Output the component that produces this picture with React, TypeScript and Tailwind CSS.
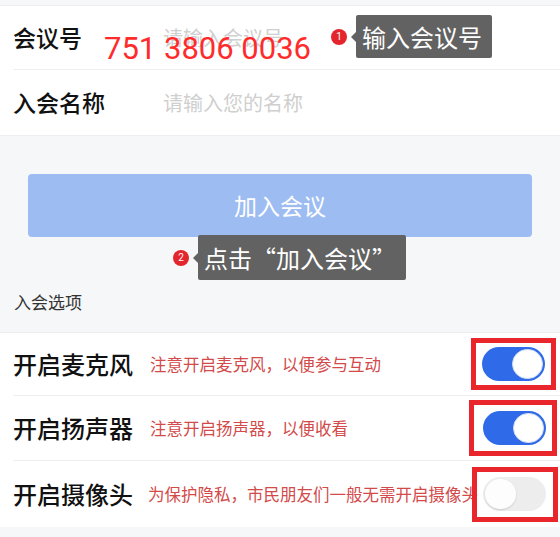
import React from 'react';

const cjk = { fontFamily: '"Noto Sans CJK SC", "Noto Sans", sans-serif' };

const Badge = ({ n }: { n: number }) => (
  <div className="w-[16px] h-[16px] rounded-full bg-[#e3262d] text-white text-[10px] leading-[16px] text-center" style={{ fontFamily: 'Roboto, sans-serif' }}>
    {n}
  </div>
);

const Tip = ({ text }: { text: string }) => (
  <div className="relative flex items-center bg-[#626262] rounded-[2px] pl-[6px] pr-[10px] h-full">
    <div className="absolute left-[-5px] top-1/2 -translate-y-1/2 w-0 h-0 border-y-[5px] border-y-transparent border-r-[5px] border-r-[#626262]" />
    <span className="text-white text-[24px] leading-none whitespace-nowrap">{text}</span>
  </div>
);

const Toggle = ({ on }: { on: boolean }) => (
  <div className={`w-[63px] h-[34px] rounded-full p-[2px] flex ${on ? 'justify-end bg-[#2f6be8]' : 'justify-start bg-[#ebebeb]/90'}`}>
    <div className={`w-[31px] h-[30px] rounded-full ${on ? 'bg-white border border-[#cfd9ee]' : 'bg-white/90 shadow-[0_1px_2px_rgba(0,0,0,0.15)]'}`} />
  </div>
);

const options = [
  { label: '开启麦克风', hint: '注意开启麦克风，以便参与互动', on: true, h: 'h-[63px]', box: 'px-[6px] py-[4px] mr-[4px]', hx: 'ml-[17px]' },
  { label: '开启扬声器', hint: '注意开启扬声器，以便收看', on: true, h: 'h-[65px]', box: 'pl-[9px] pr-[6px] py-[6px] mr-[3px]', hx: 'ml-[17px]' },
  { label: '开启摄像头', hint: '为保护隐私，市民朋友们一般无需开启摄像头', on: false, h: 'h-[66px]', box: 'pl-[6px] pr-[7px] pt-[5px] pb-[6px] mr-[2px]', hx: 'ml-[15px]' },
];

export default function App() {
  return (
    <div className="w-[560px] h-[537px] bg-[#f6f7f9] overflow-hidden" style={cjk}>
      <div className="h-[6px] border-b border-[#eceef1]" />

      {/* 会议信息 */}
      <div className="bg-white relative">
        <div className="h-[64px] ml-[13px] border-b border-[#eeeeee] flex items-center">
          <span className="w-[150px] text-[23px] font-medium text-[#111] leading-none">会议号</span>
          <span className="text-[20px] text-[#cfcfcf] leading-none">请输入会议号</span>
        </div>
        <div className="h-[65px] ml-[13px] flex items-center">
          <span className="w-[150px] text-[23px] font-medium text-[#111] leading-none">入会名称</span>
          <span className="text-[20px] text-[#cfcfcf] leading-none">请输入您的名称</span>
        </div>

        <div className="absolute left-[104px] top-[27px] text-[31px] leading-none text-[#ff2b2b]" style={{ fontFamily: 'Roboto, sans-serif' }}>
          751 3806 0036
        </div>
        <div className="absolute left-[331px] top-[9px] h-[43px] flex items-center gap-[9px]">
          <Badge n={1} />
          <Tip text="输入会议号" />
        </div>
      </div>

      <div className="h-[39px] border-t border-[#eceef1]" />
      <div className="mx-[28px] h-[63px] rounded-[4px] bg-[#9dbdf2] flex items-center justify-center">
        <span className="text-white text-[23px] leading-none">加入会议</span>
      </div>

      <div className="relative h-[95px]">
        <div className="absolute left-[173px] top-[-2px] h-[45px] flex items-center gap-[9px]">
          <Badge n={2} />
          <Tip text="点击“加入会议”" />
        </div>
        <div className="pt-[56px] pl-[14px] text-[17px] leading-none text-[#333]">入会选项</div>
      </div>

      {/* 入会选项 */}
      <div className="bg-white border-t border-[#eceef1]">
        {options.map((o, i) => (
          <div key={i} className={`${o.h} ml-[13px] flex items-center ${i < options.length - 1 ? 'border-b border-[#eeeeee]' : ''}`}>
            <span className="text-[24px] font-medium text-[#111] leading-none shrink-0">{o.label}</span>
            <span className={`${o.hx} flex-1 min-w-0 whitespace-nowrap text-[16.5px] text-[#d24a4a] leading-none`}>{o.hint}</span>
            <div className={`shrink-0 border-[5px] border-[#e8262b] ${o.box} relative`}>
              <Toggle on={o.on} />
            </div>
          </div>
        ))}
      </div>
    </div>
  );
}
